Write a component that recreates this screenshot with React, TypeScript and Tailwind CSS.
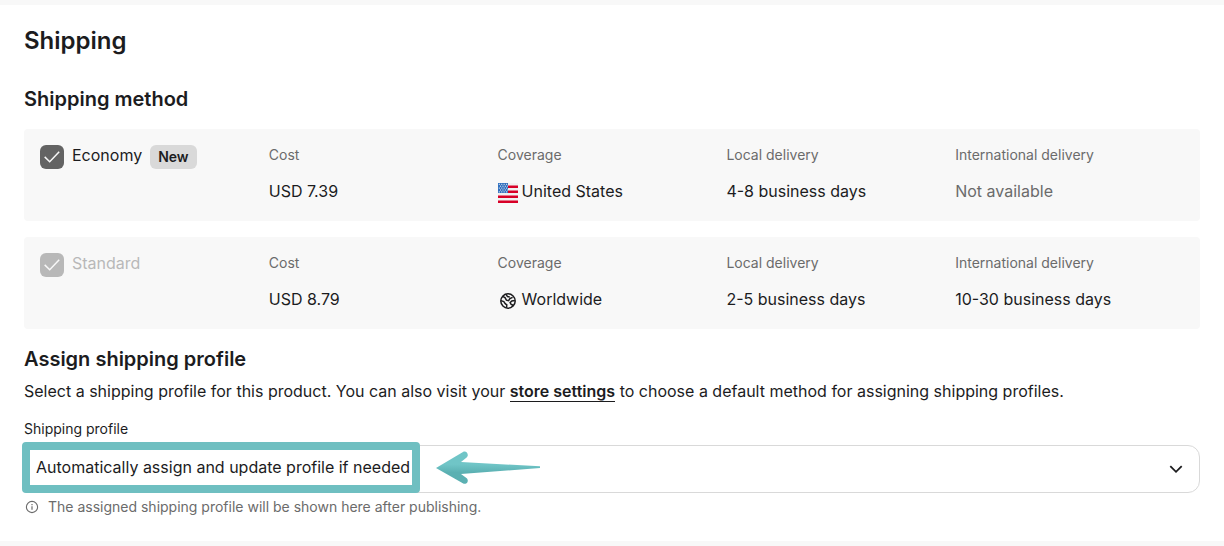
import { ReactNode } from "react";

interface Method {
  id: string;
  name: string;
  isNew?: boolean;
  disabled?: boolean;
  cost: string;
  coverage: string;
  icon: ReactNode;
  local: string;
  international: string | null;
}

const methods: Method[] = [
  {
    id: "economy",
    name: "Economy",
    isNew: true,
    cost: "USD 7.39",
    coverage: "United States",
    icon: <FlagIcon />,
    local: "4-8 business days",
    international: null,
  },
  {
    id: "standard",
    name: "Standard",
    disabled: true,
    cost: "USD 8.79",
    coverage: "Worldwide",
    icon: <GlobeIcon />,
    local: "2-5 business days",
    international: "10-30 business days",
  },
];

export default function App() {
  return (
    <main className="border-y-5 border-[#f8f8f8] bg-white px-6 pt-5 pb-6 font-['Inter',sans-serif] text-base text-[#1c1c1e]">
      <h1 className="text-2xl leading-8 font-semibold">Shipping</h1>

      <section className="mt-7">
        <h2 className="text-xl leading-7 font-semibold">Shipping method</h2>
        <div className="mt-4 flex flex-col gap-4">
          {methods.map((m) => (
            <MethodCard key={m.id} method={m} />
          ))}
        </div>
      </section>

      <section className="mt-4">
        <h2 className="text-xl leading-7 font-semibold">Assign shipping profile</h2>
        <p className="mt-1.5 leading-6">
          Select a shipping profile for this product. You can also visit your{" "}
          <a href="#settings" className="border-b border-[#1c1c1e] font-semibold">store settings</a>{" "}
          to choose a default method for assigning shipping profiles.
        </p>

        <label htmlFor="profile" className="mt-4 block text-sm leading-5">Shipping profile</label>
        <div className="relative mt-1.5">
          <select
            id="profile"
            className="block h-12 w-full appearance-none rounded-xl border border-[#d9d9d9] bg-white pr-10 pb-1 pl-[11px] focus:outline-none"
          >
            <option>Automatically assign and update profile if needed</option>
          </select>
          <svg className="pointer-events-none absolute top-3 right-3 h-6 w-6" viewBox="0 0 24 24" fill="none" stroke="#1c1c1e" strokeWidth="1.8">
            <path d="M6.3 9.2 12 14.8l5.7-5.6" />
          </svg>
          {/* Callout frame and arrow */}
          <div className="pointer-events-none absolute -top-[3px] -left-0.5 flex items-center gap-4">
            <div className="h-[51px] w-[398px] rounded border-8 border-[#6fbfc1]" />
            <CalloutArrow />
          </div>
        </div>
        <p className="mt-1 flex items-center gap-2 text-sm leading-5 text-[#6b6b6b]">
          <InfoIcon />
          The assigned shipping profile will be shown here after publishing.
        </p>
      </section>
    </main>
  );
}

function MethodCard({ method: m }: { method: Method }) {
  return (
    <div className="grid grid-cols-5 rounded bg-[#f8f8f8] p-4">
      <div className="flex items-start gap-2">
        <label className="flex gap-2">
          <span className="relative h-6 w-6">
            <input
              type="checkbox"
              defaultChecked
              disabled={m.disabled}
              className="block h-6 w-6 appearance-none rounded-md bg-[#636363] disabled:bg-[#b8b8b8]"
            />
            <svg className="pointer-events-none absolute inset-0" width="24" height="24" viewBox="0 0 24 24" fill="none" stroke="#f8f8f8" strokeWidth="1.5">
              <path d="m4.7 11.9 5 4.8 9.5-9.9" />
            </svg>
          </span>
          <span className={m.disabled ? "leading-5 text-[#b8b8b8]" : "leading-5"}>{m.name}</span>
        </label>
        {m.isNew && (
          <span className="rounded-md bg-[#d9d9d9] px-2 text-sm leading-6 font-semibold">New</span>
        )}
      </div>
      <Field label="Cost">{m.cost}</Field>
      <Field label="Coverage" icon={m.icon}>{m.coverage}</Field>
      <Field label="Local delivery">{m.local}</Field>
      <Field label="International delivery">
        {m.international ?? <span className="text-[#6b6b6b]">Not available</span>}
      </Field>
    </div>
  );
}

function Field({ label, icon, children }: { label: string; icon?: ReactNode; children: ReactNode }) {
  return (
    <div>
      <p className="text-sm leading-5 text-[#6b6b6b]">{label}</p>
      <div className="mt-4 flex h-6 items-start gap-1">
        {icon && <span className="pt-0.5">{icon}</span>}
        <p className="leading-5">{children}</p>
      </div>
    </div>
  );
}

function FlagIcon() {
  return (
    <svg width="20" height="20" viewBox="0 0 20 20">
      <rect width="20" height="20" fill="#f0f0f0" />
      <path fill="#d80027" d="M10 2.5h10V5H10zM10 7.5h10V10H10zM0 12.5h20V15H0zM0 17.5h20V20H0z" />
      <rect width="10" height="10" fill="#2e6fc0" />
      <path
        fill="none"
        stroke="#f0f0f0"
        strokeWidth="1"
        strokeDasharray="1.1 1.3"
        d="M.8 1.3H10M2 3.2h8M.8 5.1H10M2 7h8M.8 8.9H10"
      />
    </svg>
  );
}

function GlobeIcon() {
  return (
    <svg width="20" height="20" viewBox="0 0 20 20" fill="none" stroke="#1c1c1e" strokeWidth="1.5">
      <circle cx="10" cy="10" r="7.2" />
      <path d="M4.6 5.4 7 6.600l1.400 2.600 2.200.400 1.300-1.900 2.700-1.400M8 3.300l1.500 2.300 2.300.4M3 9.600l2.800 1 1.400 2 1.600 1.200-.3 3M16.900 9.400l-3.100.6-1.700 1.600.9 1.700 1.500.7-.2 2" />
    </svg>
  );
}

function InfoIcon() {
  return (
    <svg width="16" height="16" viewBox="0 0 16 16" fill="none" stroke="#6b6b6b">
      <circle cx="8" cy="8" r="5.6" strokeWidth="1.1" />
      <path d="M8 7.2v3.6M8 5v1.2" strokeWidth="1.2" />
    </svg>
  );
}

function CalloutArrow() {
  return (
    <svg width="104" height="33" viewBox="0 0 104 33">
      <defs>
        <linearGradient id="arrow" x1="0" y1="0" x2="0" y2="1">
          <stop offset="0.4" stopColor="#70c5c7" />
          <stop offset="0.65" stopColor="#5bb0b2" />
        </linearGradient>
      </defs>
      <path
        fill="url(#arrow)"
        d="M0 17 27 .9c2.5-1.3 5 .8 4.8 3.4-.1 1.2-.8 2-1.8 2.7L25 11l79 4.3v1.8L25 23l5.400 4c1.500 1.200 1.800 3 .9 4.400-1 1.500-3 1.700-4.500.8z"
      />
    </svg>
  );
}
